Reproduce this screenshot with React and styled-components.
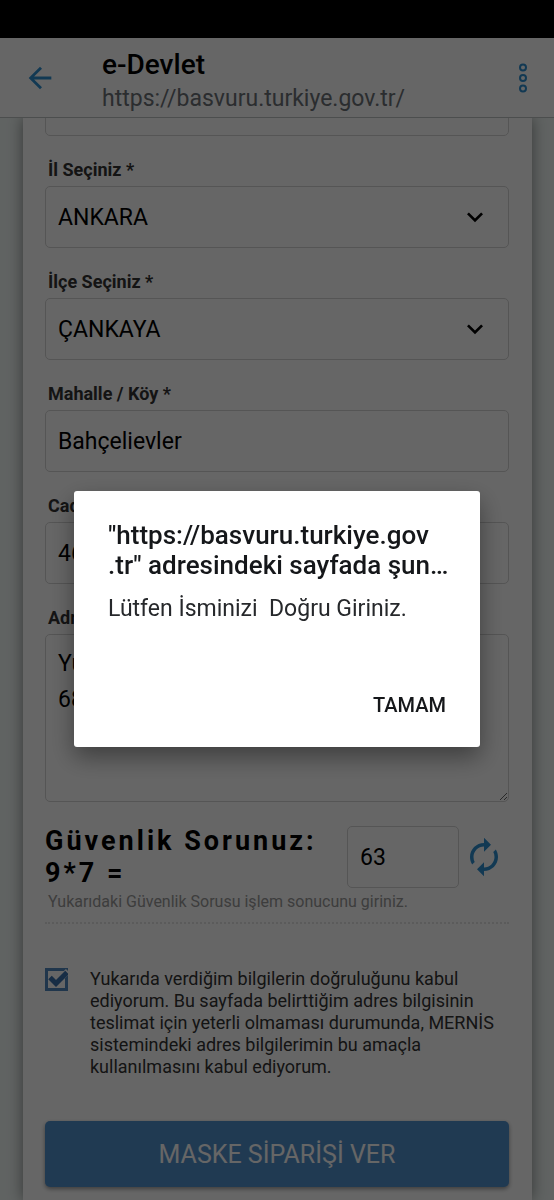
import React from "react";
import styled, { createGlobalStyle } from "styled-components";
import { MdArrowBack, MdAutorenew, MdKeyboardArrowDown } from "react-icons/md";

const GlobalStyle = createGlobalStyle`
  * {
    box-sizing: border-box;
  }
  body {
    margin: 0;
    background: #f0f7f5;
    font-family: Roboto, "Open Sans", sans-serif;
    color: #000;
  }
  button, input, select, textarea {
    font-family: inherit;
    color: inherit;
  }
`;

const Page = styled.div`
  min-height: 100vh;
  display: flex;
  flex-direction: column;
`;
const StatusBar = styled.div`
  height: 38px;
  background: #000;
`;
const Header = styled.header`
  height: 80px;
  display: flex;
  align-items: center;
  padding: 0 15px 0 24px;
  background: #fff;
  border-bottom: 1px solid #bfc3c4;
`;
const IconButton = styled.button`
  display: flex;
  align-items: center;
  justify-content: center;
  width: 32px;
  height: 40px;
  padding: 0;
  border: 0;
  background: none;
  color: #2f8fd0;

  svg {
    flex-shrink: 0;
  }
`;
const Heading = styled.div`
  flex: 1;
  padding: 8px 0 0 46px;
`;
const Title = styled.h1`
  margin: 0;
  font-size: 28px;
  font-weight: 500;
  line-height: 34px;
`;
const Url = styled.div`
  font-size: 23px;
  line-height: 34px;
  color: #6b7076;
`;
const Main = styled.main`
  flex: 1;
  display: flex;
  padding: 0 22px 0 23px;
  overflow: hidden;
`;
const Card = styled.form`
  flex: 1;
  min-width: 0;
  padding: 0 23px 13px 22px;
  background: #fff;
  box-shadow: 0 0 14px rgba(0, 0, 0, 0.45);
`;
const Scrolled = styled.div`
  height: 18px;
  display: flex;
  align-items: flex-end;
  overflow: hidden;
`;
const Label = styled.label`
  display: block;
  padding: 24px 3px 6px;
  font-size: 18px;
  font-weight: 700;
  line-height: 20px;
  color: #333;
`;
const Input = styled.input`
  display: block;
  flex-shrink: 0;
  width: 100%;
  height: 62px;
  padding: 0 12px;
  border: 1px solid #d4d4d4;
  border-radius: 5px;
  background: #fff;
  font-size: 23px;
`;
const SelectBox = styled.div`
  display: grid;
  align-items: center;

  > * {
    grid-area: 1 / 1;
  }
  svg {
    justify-self: end;
    margin-right: 18px;
    pointer-events: none;
  }
`;
const Select = styled(Input)`
  appearance: none;
`;
const TextArea = styled(Input)`
  height: 168px;
  padding: 11px 12px;
  line-height: 36px;
  resize: vertical;
`;
const Captcha = styled.div`
  display: grid;
  grid-template-columns: 1fr 112px 32px;
  column-gap: 9px;
  align-items: center;
  padding: 23px 9px 0 0;
`;
const Question = styled.label`
  font-size: 27px;
  font-weight: 700;
  line-height: 32px;
  letter-spacing: 3px;
`;
const Hint = styled.p`
  margin: 0;
  padding: 3px 3px 10px;
  font-size: 16px;
  line-height: 20px;
  color: #999;
  border-bottom: 2px dotted #e4e4e4;
`;
const Consent = styled.label`
  display: grid;
  grid-template-columns: 23px 1fr;
  column-gap: 22px;
  padding: 44px 0 43px;
  font-size: 18px;
  line-height: 22px;
  color: #333;
`;
const CheckBox = styled.span`
  display: grid;
  width: 23px;
  height: 23px;

  > * {
    grid-area: 1 / 1;
  }
  input {
    appearance: none;
    width: 23px;
    height: 23px;
    margin: 0;
    border: 3px solid #5288bd;
  }
  svg {
    display: none;
    pointer-events: none;
  }
  input:checked + svg {
    display: block;
  }
`;
const Submit = styled.button`
  display: block;
  width: 100%;
  height: 66px;
  border: 0;
  border-radius: 5px;
  background: #5291cd;
  color: #fff;
  font-size: 25px;
  box-shadow: 0 2px 4px rgba(0, 0, 0, 0.4);
`;

const Overlay = styled.div`
  position: fixed;
  inset: 0;
  display: flex;
  align-items: center;
  padding: 38px 74px 0;
  background: rgba(0, 0, 0, 0.6);
`;
const Dialog = styled.div`
  flex: 1;
  min-width: 0;
  padding: 29px 24px 22px 34px;
  border-radius: 3px;
  background: #fff;
  box-shadow: 0 10px 24px rgba(0, 0, 0, 0.4);
`;
const DialogTitle = styled.h2`
  margin: 0;
  font-size: 26px;
  font-weight: 500;
  line-height: 30px;
  color: #15171a;
`;
const Message = styled.p`
  margin: 15px 0 62px;
  font-size: 23px;
  line-height: 28px;
  color: #26282b;
  white-space: pre-wrap;
`;
const Actions = styled.div`
  display: flex;
  justify-content: flex-end;
  padding-right: 10px;
`;
const Confirm = styled.button`
  height: 40px;
  padding: 0;
  border: 0;
  background: none;
  color: #15171a;
  font-size: 20px;
  font-weight: 500;
`;

function MenuDots() {
  return (
    <svg width="10" height="30" viewBox="0 0 10 30" fill="none" stroke="currentColor" strokeWidth="2">
      <circle cx="5" cy="4.500" r="3" />
      <circle cx="5" cy="15" r="3" />
      <circle cx="5" cy="25.500" r="3" />
    </svg>
  );
}

function SelectField({ id, label, value }) {
  return (
    <>
      <Label htmlFor={id}>{label}</Label>
      <SelectBox>
        <Select as="select" id={id} defaultValue={value}>
          <option>{value}</option>
        </Select>
        <MdKeyboardArrowDown size={32} />
      </SelectBox>
    </>
  );
}

function TextField({ id, label, value }) {
  return (
    <>
      <Label htmlFor={id}>{label}</Label>
      <Input id={id} defaultValue={value} />
    </>
  );
}

function App() {
  const [open, setOpen] = React.useState(true);

  const handleSubmit = (e) => {
    e.preventDefault();
    setOpen(true);
  };

  return (
    <Page>
      <GlobalStyle />
      <StatusBar />
      <Header>
        <IconButton aria-label="Geri">
          <MdArrowBack size={34} />
        </IconButton>
        <Heading>
          <Title>e-Devlet</Title>
          <Url>https://basvuru.turkiye.gov.tr/</Url>
        </Heading>
        <IconButton aria-label="Menü">
          <MenuDots />
        </IconButton>
      </Header>
      <Main>
        <Card onSubmit={handleSubmit}>
          <Scrolled>
            <Input aria-label="Telefon" />
          </Scrolled>
          <SelectField id="il" label="İl Seçiniz *" value="ANKARA" />
          <SelectField id="ilce" label="İlçe Seçiniz *" value="ÇANKAYA" />
          <TextField id="mahalle" label="Mahalle / Köy *" value="Bahçelievler" />
          <TextField id="cadde" label="Cadde / Sokak *" value="46" />
          <Label htmlFor="adres">Adres *</Label>
          <TextArea as="textarea" id="adres" defaultValue={"Yu\n68"} />
          <Captcha>
            <Question htmlFor="guvenlik">Güvenlik Sorunuz: 9*7 =</Question>
            <Input id="guvenlik" defaultValue="63" />
            <IconButton type="button" aria-label="Yenile">
              <MdAutorenew size={42} />
            </IconButton>
          </Captcha>
          <Hint>Yukarıdaki Güvenlik Sorusu işlem sonucunu giriniz.</Hint>
          <Consent>
            <CheckBox>
              <input type="checkbox" defaultChecked />
              <svg width="23" height="23" viewBox="0 0 23 23" fill="none">
                <path d="M6 9l6 5L23 3" stroke="#fff" strokeWidth="6" />
                <path d="M5 9.500l6 6L22 4.500" stroke="#3a70ad" strokeWidth="5" />
              </svg>
            </CheckBox>
            <span>
              Yukarıda verdiğim bilgilerin doğruluğunu kabul ediyorum. Bu sayfada belirttiğim adres
              bilgisinin teslimat için yeterli olmaması durumunda, MERNİS sistemindeki adres
              bilgilerimin bu amaçla kullanılmasını kabul ediyorum.
            </span>
          </Consent>
          <Submit type="submit">MASKE SİPARİŞİ VER</Submit>
        </Card>
      </Main>
      {open && (
        <Overlay>
          <Dialog role="alertdialog" aria-labelledby="dialog-title">
            <DialogTitle id="dialog-title">
              "https://basvuru.turkiye.gov
              <wbr />
              .tr" adresindeki sayfada şun…
            </DialogTitle>
            <Message>{"Lütfen İsminizi  Doğru Giriniz."}</Message>
            <Actions>
              <Confirm onClick={() => setOpen(false)}>TAMAM</Confirm>
            </Actions>
          </Dialog>
        </Overlay>
      )}
    </Page>
  );
}

export default App;
